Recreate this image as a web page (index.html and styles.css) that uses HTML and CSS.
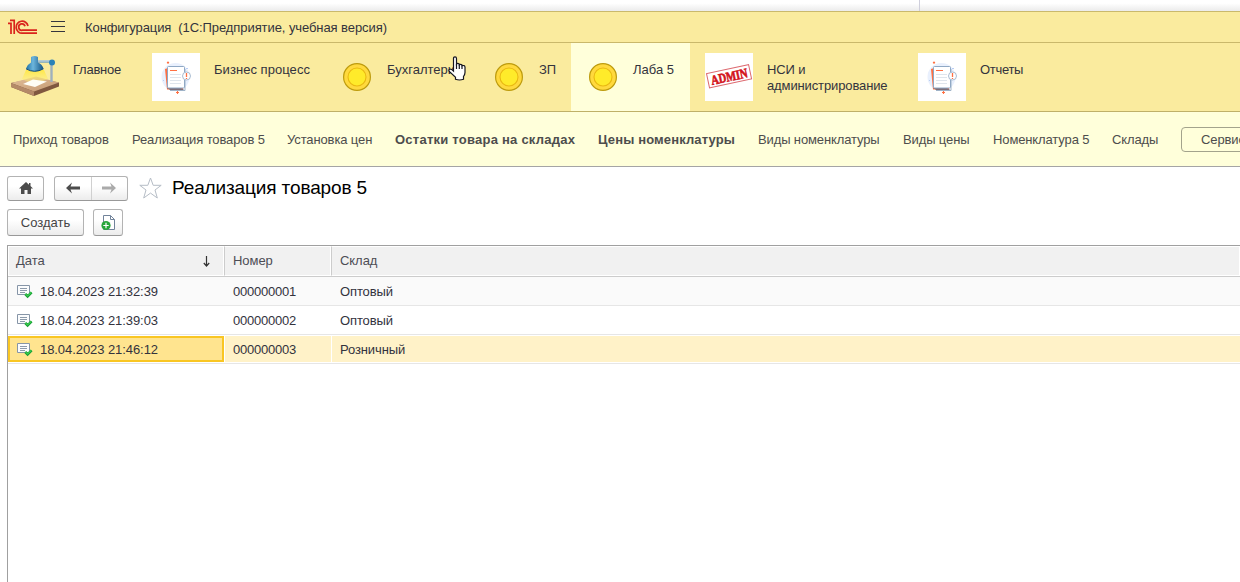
FILE: index.html
```html
<!DOCTYPE html>
<html lang="ru">
<head>
<meta charset="utf-8">
<title>Реализация товаров 5</title>
<link rel="stylesheet" href="styles.css">
</head>
<body>
<svg class="defs" width="0" height="0">
  <defs>
    <linearGradient id="wood" x1="0" y1="0" x2="1" y2="1"><stop offset="0" stop-color="#e0bd98"/><stop offset="1" stop-color="#c59a74"/></linearGradient>
    <linearGradient id="shade" x1="0" y1="0" x2="1" y2="0"><stop offset="0" stop-color="#1c6fa3"/><stop offset=".4" stop-color="#6db6dc"/><stop offset="1" stop-color="#125384"/></linearGradient>
    <linearGradient id="beam" x1="0" y1="0" x2="0" y2="1"><stop offset="0" stop-color="#ffe747"/><stop offset="1" stop-color="#fff28a" stop-opacity=".25"/></linearGradient>
    <symbol id="coin" viewBox="0 0 32 32">
      <circle cx="16" cy="16" r="13.4" fill="#ffd93d" stroke="#bd9b0e" stroke-width="1.2"/>
      <circle cx="16" cy="16" r="9" fill="#ffeb2a" stroke="#e9b912" stroke-width="1.1"/>
    </symbol>
    <symbol id="papers" viewBox="0 0 48 48">
      <rect width="48" height="48" fill="#fff"/>
      <circle cx="23.500" cy="24" r="14" fill="#e9f0fd"/>
      <path d="M13 16l3-1v20h15v1.500H15z" fill="#ff7043"/>
      <path d="M15 35h14l4 2.500H19z" fill="#7d6f78"/>
      <path d="M31 14.500l2 1.500v21.500H18" fill="none" stroke="#9fb3c8"/>
      <rect x="15.500" y="13.500" width="17" height="21.500" rx="1" fill="#fff" stroke="#8fa8c4"/>
      <path d="M18 17.500h7" stroke="#ff7043"/>
      <path d="M18 21.500h11M18 24.500h11M18 27.500h11M18 30.500h11" stroke="#dfe5ec"/>
      <circle cx="34.500" cy="23" r="4" fill="#fff" stroke="#a9bdd2"/>
      <path d="M34.500 20v4M34.500 25v1" stroke="#ff7043" stroke-width="1.300"/>
      <path d="M16 8.500v2.200M14.900 9.600h2.200M25.500 38v3M24 39.500h3" stroke="#ff7043" stroke-width="1.100"/>
      <path d="M34 15.500h2M11 27.500h1" stroke="#b9cdf3"/>
    </symbol>
    <symbol id="posted" viewBox="0 0 16 14">
      <path d="M.5.500h12v9H.5z" fill="#fbfcfd" stroke="#8695a7"/>
      <path d="M3 3.500h7M3 5.500h7M3 7.500h5" stroke="#8c9aaa"/>
      <path d="M8.300 9l2.300 2.300 4-4" fill="none" stroke="#169b35" stroke-width="2.600"/>
      <path d="M8.500 9l2.100 2 3.800-3.700" fill="none" stroke="#38cc4c" stroke-width="1.200"/>
    </symbol>
  </defs>
</svg>

<div class="desk"></div>

<header class="titlebar">
  <svg class="logo" viewBox="0 0 30 16" width="30" height="16">
    <g fill="none" stroke="#d9231c" stroke-width="1.700">
      <path d="M0 4.300H3V15M2 1.300H6.200V15"/>
      <path d="M20 7A6 6 0 1 0 14.500 14.200H29"/>
      <path d="M17 7.300A3.200 3.200 0 1 0 14.500 11.200H29"/>
    </g>
  </svg>
  <svg class="burger" viewBox="0 0 14 12" width="14" height="12"><path d="M0 .5h14M0 5.500h14M0 10.500h14" stroke="#35353d"/></svg>
  <span class="apptitle">Конфигурация&nbsp; (1С:Предприятие, учебная версия)</span>
</header>

<nav class="sections">
  <a class="section main">
    <svg width="48" height="48" viewBox="0 0 48 48">
      <path d="M0 30L25 25 48 29.500v4L23 43 0 34z" fill="#80583f"/>
      <path d="M0 30L25 23.500 48 29.500 23 38.500z" fill="url(#wood)"/>
      <path d="M0 30L23 38.500V43L0 34z" fill="#b48a68"/>
      <path d="M40.500 9v20" stroke="#9fb0bd" stroke-width="2.400"/>
      <path d="M15 17h18l4 9-14 6-12-6z" fill="url(#beam)"/>
      <path d="M12 31l10-4.500 14 2-12 5.500z" fill="#fffef6"/>
      <path d="M27 8.500h13" stroke="#6f9fbd" stroke-width="2.400"/>
      <path d="M27 8h13" stroke="#d5e3eb"/>
      <path d="M20 4q3.500-2 7 0v5.500q4 1.500 5.500 6-8.500 5.500-17.500 0 1.200-4 5-6z" fill="url(#shade)"/>
      <path d="M15 15.800q8.500 5 17.500 0" fill="none" stroke="#104a75"/>
      <circle cx="41" cy="9.500" r="3" fill="#2c82b7"/>
    </svg>
    <span>Главное</span>
  </a>
  <a class="section process">
    <svg width="48" height="48"><use href="#papers"/></svg>
    <span>Бизнес процесс</span>
  </a>
  <a class="section accounting">
    <svg width="32" height="32"><use href="#coin"/></svg>
    <span>Бухгалтери</span>
  </a>
  <a class="section salary">
    <svg width="32" height="32"><use href="#coin"/></svg>
    <span>ЗП</span>
  </a>
  <a class="section lab active">
    <svg width="32" height="32"><use href="#coin"/></svg>
    <span>Лаба 5</span>
  </a>
  <a class="section admin">
    <svg width="48" height="48" viewBox="0 0 48 48">
      <rect width="48" height="48" fill="#fff"/>
      <g transform="rotate(-12 24 23)">
        <rect x="2.500" y="16" width="43" height="14.500" fill="none" stroke="#dd6a70" stroke-width="1"/>
        <text x="5.500" y="28.200" class="stamp" textLength="37" lengthAdjust="spacingAndGlyphs">ADMIN</text>
      </g>
    </svg>
    <span>НСИ и<br>администрирование</span>
  </a>
  <a class="section reports">
    <svg width="48" height="48"><use href="#papers"/></svg>
    <span>Отчеты</span>
  </a>
  <svg class="pointer" width="19" height="25" viewBox="0 0 19 25">
    <path d="M5.500 15V2.500q0-1.700 1.500-1.700t1.500 1.700V8q1-1.200 2.800 0v.7q1.500-1 2.700.3v.7q2.700-.7 3 1.300v5.500q0 2-1.500 4v2.800q-4 1.400-8 0v-2L1.300 15.500Q.3 13.500 2 13q1.500 0 3.500 2z" fill="#fff" stroke="#15151f" stroke-width="1.200"/>
    <path d="M8.500 8v5M11.300 8.500V13M14 9.500V13" stroke="#15151f" stroke-width="1.200"/>
  </svg>
</nav>

<nav class="commands">
  <a class="c1">Приход товаров</a>
  <a class="c2">Реализация товаров 5</a>
  <a class="c3">Установка цен</a>
  <a class="c4 strong">Остатки товара на складах</a>
  <a class="c5 strong">Цены номенклатуры</a>
  <a class="c6">Виды номенклатуры</a>
  <a class="c7">Виды цены</a>
  <a class="c8">Номенклатура 5</a>
  <a class="c9">Склады</a>
  <button class="service">Сервис</button>
</nav>

<main class="page">
  <div class="heading">
    <button class="btn home"><svg width="14" height="12" viewBox="0 0 14 12"><path d="M7 0L0 6.500h2V12h3.500V8h3v4H12V6.500h2L11.500 4V1H10v1.700z" fill="#4c4c4c"/></svg></button>
    <div class="btn history">
      <span><svg width="14" height="12" viewBox="0 0 14 12"><path d="M0 6l6-5.500-1.500 4H14v3H4.500l1.500 4z" fill="#4c4c4c"/></svg></span>
      <span><svg width="14" height="12" viewBox="0 0 14 12"><path d="M14 6L8 .5l1.500 4H0v3h9.500l-1.500 4z" fill="#aaa"/></svg></span>
    </div>
    <svg class="star" width="24" height="23" viewBox="0 0 24 23"><path d="M12.500 1l2.700 7.300h8L17 13l2.300 8L12.500 16.100 5.700 21 8 13 1.800 8.300h8z" fill="#fff" stroke="#b6bdc6"/></svg>
    <h1>Реализация товаров 5</h1>
  </div>
  <div class="toolbar">
    <button class="btn create"><span>Создать</span></button>
    <button class="btn copy"><svg width="15" height="16" viewBox="0 0 15 16">
      <path d="M2.500.5h7l4 4v10h-11z" fill="#fff" stroke="#71839a"/>
      <path d="M9.500.5v4h4" fill="none" stroke="#71839a"/>
      <circle cx="5" cy="10.500" r="4.600" fill="#27a53b"/>
      <path d="M5 7.800v5.400M2.300 10.500h5.400" stroke="#fff" stroke-width="1.200"/>
    </svg></button>
  </div>
  <div class="grid">
    <div class="row head">
      <div class="cell date"><span>Дата</span><svg width="7" height="11" viewBox="0 0 7 11"><path d="M3.500 0v10M.8 7l2.700 3 2.700-3" fill="none" stroke="#333" stroke-width="1.200"/></svg></div>
      <div class="cell number"><span>Номер</span></div>
      <div class="cell store"><span>Склад</span></div>
    </div>
    <div class="row odd">
      <div class="cell date"><svg width="16" height="14"><use href="#posted"/></svg><span>18.04.2023 21:32:39</span></div>
      <div class="cell number"><span>000000001</span></div>
      <div class="cell store"><span>Оптовый</span></div>
    </div>
    <div class="row">
      <div class="cell date"><svg width="16" height="14"><use href="#posted"/></svg><span>18.04.2023 21:39:03</span></div>
      <div class="cell number"><span>000000002</span></div>
      <div class="cell store"><span>Оптовый</span></div>
    </div>
    <div class="row selected">
      <div class="cell date"><svg width="16" height="14"><use href="#posted"/></svg><span>18.04.2023 21:46:12</span></div>
      <div class="cell number"><span>000000003</span></div>
      <div class="cell store"><span>Розничный</span></div>
    </div>
  </div>
</main>
</body>
</html>
```
FILE: styles.css
```css
* { box-sizing: border-box; }
body {
  margin: 0;
  width: 1240px;
  height: 582px;
  overflow: hidden;
  display: flex;
  flex-direction: column;
  background: #fff;
  font: 13px/16px "Liberation Sans", Arial, sans-serif;
  color: #33333d;
}
svg { display: block; flex: none; }
.defs { position: absolute; }
button { font: inherit; color: inherit; letter-spacing: inherit; }
span, a, h1 { white-space: nowrap; }

.desk {
  height: 11px;
  flex: none;
  background: linear-gradient(90deg, transparent 919px, #cfcfdc 919px, #cfcfdc 920px, transparent 920px), linear-gradient(#fff 30%, #ebebeb);
}
.titlebar {
  height: 32px;
  flex: none;
  display: flex;
  align-items: center;
  padding-left: 8px;
  background: #faeb9e;
  border-top: 1px solid #cab96c;
  border-bottom: 1px solid #c9b86b;
}
.burger { margin-left: 13px; }
.apptitle { margin: 2px 0 0 20px; letter-spacing: -.08px; }

.sections {
  position: relative;
  height: 69px;
  flex: none;
  display: flex;
  background: #faeb9e;
  border-bottom: 1px solid #bfb068;
}
.section {
  display: flex;
  align-items: center;
  gap: 14px;
  padding-left: 15px;
}
.section span { align-self: flex-start; margin-top: 19px; }
.main { width: 137px; padding-left: 11px; letter-spacing: -.25px; }
.process { width: 189px; letter-spacing: .05px; }
.accounting { width: 152px; }
.salary { width: 93px; }
.lab { width: 119px; padding-left: 16px; }
.admin { width: 213px; letter-spacing: -.12px; }
.reports { letter-spacing: -.3px; }
.active { background: #ffffda; }
.stamp { font: bold 13.500px "Liberation Serif", serif; fill: #d3131b; stroke: #d3131b; stroke-width: .6px; }
.pointer { position: absolute; left: 448px; top: 13px; }

.commands {
  height: 55px;
  flex: none;
  display: flex;
  align-items: center;
  padding-left: 13px;
  gap: 23px;
  background: #ffffda;
  border-bottom: 1px solid #a5a5a5;
  color: #4d4d4d;
  letter-spacing: -.12px;
}
.commands a { flex: none; padding-top: 2px; }
.c1 { width: 96px; letter-spacing: -.06px; }
.c2 { width: 132px; }
.c3 { width: 85px; }
.c4 { width: 180px; }
.c5 { width: 137px; }
.c6 { width: 122px; }
.c7 { width: 67px; }
.c8 { width: 96px; }
.c9 { width: 46px; }
.strong { font-weight: bold; }
.c4.strong { letter-spacing: .24px; }
.c5.strong { letter-spacing: .14px; }
.service {
  flex: none;
  width: 84px;
  height: 25px;
  padding: 2px 0 0 19px;
  text-align: left;
  background: transparent;
  border: 1px solid #a3a38c;
  border-radius: 4px;
}

.page { flex: 1; padding: 8px 0 0 7px; display: flex; flex-direction: column; }
.heading { display: flex; align-items: center; height: 26px; }
.btn {
  display: flex;
  align-items: center;
  justify-content: center;
  height: 26px;
  padding: 0;
  background: linear-gradient(#fff 40%, #ececec);
  border: 1px solid #b3b3b3;
  border-bottom-color: #999;
  border-radius: 3px;
  color: #444;
}
.home { width: 37px; height: 25px; }
.history { width: 74px; height: 25px; margin-left: 10px; align-items: stretch; }
.history span { flex: 1; display: flex; align-items: center; justify-content: center; }
.history span + span { border-left: 1px solid #d0d0d0; }
.star { margin-left: 10px; }
h1 { margin: 0 0 0 10px; font-size: 19px; line-height: 24px; font-weight: normal; color: #000; letter-spacing: -.13px; }
.toolbar { display: flex; gap: 9px; margin-top: 8px; }
.create { width: 77px; height: 27px; }
.copy { width: 30px; height: 27px; }

.grid { flex: 1; margin-top: 9px; border: solid #a0a0a0; border-width: 1px 0 0 1px; }
.row { display: flex; height: 29px; border-bottom: 1px solid #e6e6e6; background: #fff; }
.cell { display: flex; align-items: center; padding-left: 9px; }
.cell span { padding-top: 2px; }
.date { width: 216px; padding-left: 8px; letter-spacing: -.07px; }
.number { width: 107px; letter-spacing: -.22px; }
.store { flex: 1; letter-spacing: -.12px; }
.row .date svg { margin: 2px 7px 0 1px; }
.head { height: 31px; border-bottom-color: #ccc; color: #4d4d55; }
.head .cell { background: #f1f1f1; border: 1px solid #fff; padding-left: 8px; letter-spacing: -.05px; }
.head .cell span { padding-top: 0; }
.head .cell + .cell { border-left-color: #ccc; }
.head .date { justify-content: space-between; padding-left: 7px; }
.head .date svg { margin: 0 13px 0 0; }
.odd { background: #fafafa; }
.selected .cell { background: #fff2c8; border: solid #fff; border-width: 1px 0 1px 1px; padding-left: 8px; }
.selected .date { margin: 1px 0; background: #ffe48f; border: 2px solid #f9c623; padding-left: 6px; }
```
